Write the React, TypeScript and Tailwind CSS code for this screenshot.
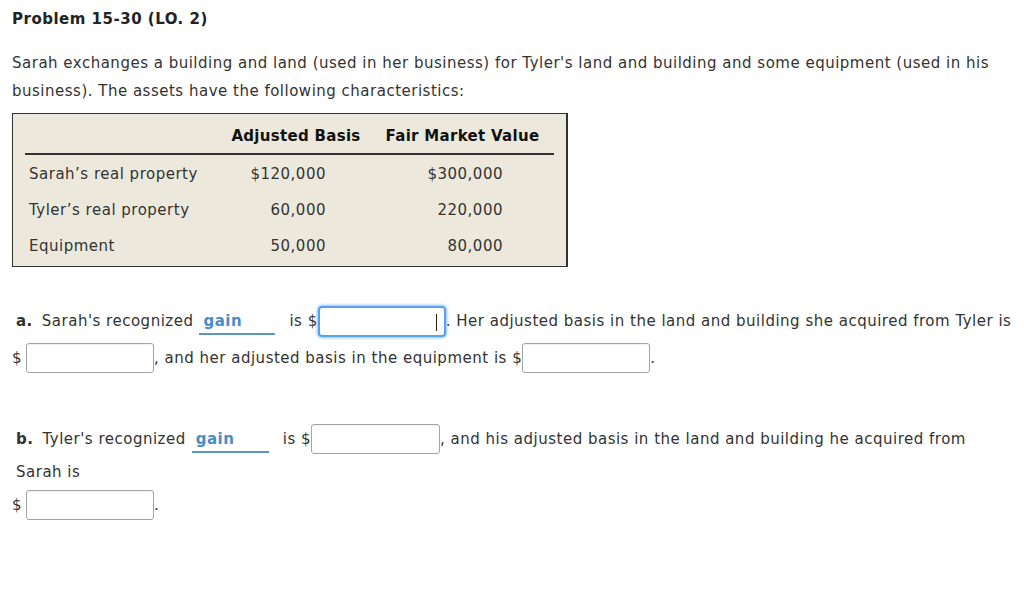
import React from "react";

function Input({ focused, w = 128, h = 30 }: { focused?: boolean; w?: number; h?: number }) {
  if (focused) {
    return (
      <span className="relative inline-block h-[31px] w-[128px] rounded-[4px] border-2 border-[#5aa0f0] bg-white shadow-[0_0_3px_1px_#8ec1f7]">
        <span className="absolute right-[7px] top-[6px] h-[17px] w-px bg-[#222]" />
      </span>
    );
  }
  return (
    <span
      className="inline-block rounded-[3px] border border-[#a4a4a4] bg-white shadow-[inset_0_1px_1px_rgba(0,0,0,0.06)]"
      style={{ width: w, height: h }}
    />
  );
}

function Gain({ w }: { w: number }) {
  return (
    <span className="relative flex h-[32px] items-center" style={{ width: w }}>
      <span className="pl-[4px] font-bold text-[#4a8cc8]">gain</span>
      <span className="absolute left-0 top-[28px] h-[2px] w-full bg-[#5b94c6]" />
    </span>
  );
}

export default function App() {
  return (
    <div
      className="min-h-[615px] w-[1024px] bg-white text-[15px] tracking-[0.5px] text-[#333]"
      style={{ fontFamily: '"DejaVu Sans", Verdana, sans-serif' }}
    >
      <div className="px-[12px] pt-[9px]">
        <div className="h-[20px] font-bold leading-[20px] text-[#222]">Problem 15-30 (LO. 2)</div>
        <div className="mt-[20px] leading-[28px]">
          <div className="whitespace-nowrap">
            Sarah exchanges a building and land (used in her business) for Tyler's land and building and some equipment (used in his
          </div>
          <div className="whitespace-nowrap">business). The assets have the following characteristics:</div>
        </div>

        <div className="mt-[8px] h-[154px] w-[556px] border border-[#333] border-r-2 bg-[#ece9dc] pl-[12px] pr-[12px]">
          <div className="flex h-[41px] items-end border-b-2 border-[#333] pb-[6px] font-bold tracking-[0.3px] text-[#111]">
            <div className="w-[190px]" />
            <div className="w-[164px] pr-[2px] text-center">Adjusted Basis</div>
            <div className="flex-1 pr-[8px] text-center">Fair Market Value</div>
          </div>
          {[
            ["Sarah\u2019s real property", "$120,000", "$300,000"],
            ["Tyler\u2019s real property", "60,000", "220,000"],
            ["Equipment", "50,000", "80,000"],
          ].map((r, i) => (
            <div key={i} className={`flex h-[36px] items-center ${i === 0 ? "mt-[1px]" : ""}`}>
              <div className="w-[190px] pl-[4px]">{r[0]}</div>
              <div className="w-[164px] pr-[53px] text-right">{r[1]}</div>
              <div className="flex-1 pr-[51px] text-right">{r[2]}</div>
            </div>
          ))}
        </div>

        <div className="mt-[38px]">
          <div className="flex h-[32px] items-center whitespace-nowrap pl-[4px]">
            <span className="font-bold">a.</span>
            <span className="ml-[9px] mr-[6px]">Sarah's recognized</span>
            <Gain w={76} />
            <span className="ml-[14px]">is $</span>
            <Input focused />
            <span>. Her adjusted basis in the land and building she acquired from Tyler is</span>
          </div>
          <div className="mt-[6px] flex h-[30px] items-center whitespace-nowrap">
            <span className="mr-[4px]">$</span>
            <Input w={128} h={30} />
            <span>, and her adjusted basis in the equipment is $</span>
            <Input w={128} h={30} />
            <span>.</span>
          </div>
        </div>

        <div className="mt-[51px]">
          <div className="flex h-[30px] items-center whitespace-nowrap pl-[4px]">
            <span className="font-bold">b.</span>
            <span className="ml-[9px] mr-[6px]">Tyler's recognized</span>
            <Gain w={77} />
            <span className="ml-[14px]">is $</span>
            <Input w={129} h={30} />
            <span>, and his adjusted basis in the land and building he acquired from</span>
          </div>
          <div className="mt-[3px] flex h-[30px] items-center pl-[4px]">Sarah is</div>
          <div className="mt-[3px] flex h-[30px] items-center whitespace-nowrap">
            <span className="mr-[4px]">$</span>
            <Input w={128} h={30} />
            <span>.</span>
          </div>
        </div>
      </div>
    </div>
  );
}
